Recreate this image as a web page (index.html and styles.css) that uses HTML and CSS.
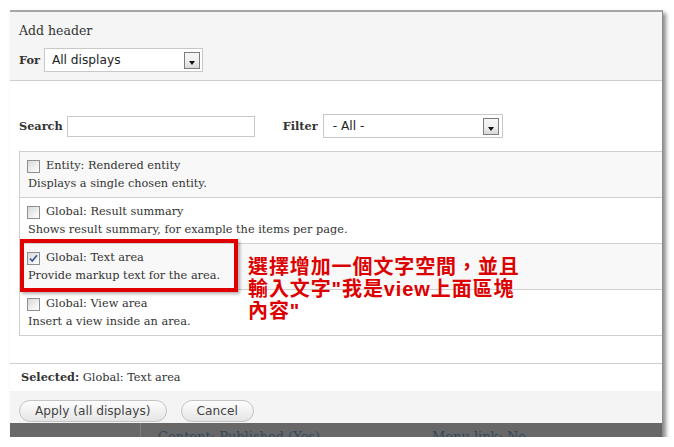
FILE: index.html
```html
<!DOCTYPE html>
<html lang="zh-Hant">
<head>
    <meta charset="UTF-8">
    <meta name="viewport" content="width=device-width, initial-scale=1.0">
    <title>Add header</title>
    <link rel="stylesheet" href="styles.css">
</head>
<body>
    <div class="shot">
        <div class="dialog-head">
            <h1>Add header</h1>
            <div class="for-row">
                <label>For</label>
                <div class="select select-for">
                    <span>All displays</span>
                    <span class="arrow"></span>
                </div>
            </div>
        </div>

        <div class="dialog-body">
            <div class="filters">
                <label>Search</label>
                <div class="search-input"></div>
                <label class="filter-label">Filter</label>
                <div class="select select-filter">
                    <span>- All -</span>
                    <span class="arrow"></span>
                </div>
            </div>

            <div class="options">
                <div class="option shaded">
                    <div class="option-title"><span class="checkbox"></span>Entity: Rendered entity</div>
                    <div class="option-desc">Displays a single chosen entity.</div>
                </div>
                <div class="option">
                    <div class="option-title"><span class="checkbox"></span>Global: Result summary</div>
                    <div class="option-desc">Shows result summary, for example the items per page.</div>
                </div>
                <div class="option shaded">
                    <div class="option-title">
                        <span class="checkbox">
                            <svg width="11" height="11" viewBox="0 0 11 11"><path d="M2 5.5 L4.3 8 L9 2.3" fill="none" stroke="#3f5797" stroke-width="1.8"/></svg>
                        </span>Global: Text area
                    </div>
                    <div class="option-desc">Provide markup text for the area.</div>
                </div>
                <div class="option">
                    <div class="option-title"><span class="checkbox"></span>Global: View area</div>
                    <div class="option-desc">Insert a view inside an area.</div>
                </div>
            </div>

            <!-- annotation drawn on top of the screenshot -->
            <div class="mark"></div>
            <div class="note">選擇增加一個文字空間，並且<br>輸入文字"我是view上面區塊<br>內容"</div>
        </div>

        <div class="selected"><b>Selected:</b> Global: Text area</div>

        <div class="buttons">
            <button>Apply (all displays)</button>
            <button>Cancel</button>
        </div>

        <div class="behind">
            <div class="behind-side"></div>
            <div class="behind-main">
                <span class="behind-link">Content: Published (Yes)</span><span>Menu link: No</span>
            </div>
        </div>
    </div>
</body>
</html>
```

FILE: styles.css
```css
body {
    margin: 0;
    background-color: #fff;
    font-family: "DejaVu Serif", Georgia, serif;
    font-size: 11.3px;
    color: #333;
}
.shot {
    width: 652px;
    margin: 10px 0 0 10px;
    border-top: 2px solid #a6a6a6;
    border-right: 1px solid #8c8c8c;
    box-shadow: 3px 3px 4px rgba(0,0,0,0.45);
    overflow: hidden;
}
.dialog-head {
    background-color: #f5f5f5;
    padding: 10px 9px 8px;
    border-bottom: 1px solid #cdcdcd;
}
.dialog-head h1 {
    margin: 0;
    font-size: 12.5px;
    font-weight: normal;
    line-height: 18px;
}
.for-row {
    display: flex;
    align-items: center;
    margin-top: 8px;
}
label {
    font-weight: bold;
    margin-right: 4px;
}
.select {
    display: flex;
    align-items: center;
    justify-content: space-between;
    box-sizing: border-box;
    height: 24px;
    padding: 0 2px 0 7px;
    border: 1px solid #c8c8c8;
    background-color: #fff;
    font-family: "DejaVu Sans", Tahoma, sans-serif;
    font-size: 12.2px;
    color: #222;
}
.select-for {
    width: 159px;
}
.select-filter {
    width: 180px;
    padding-left: 9px;
    padding-right: 3px;
}
.arrow {
    position: relative;
    width: 16px;
    height: 17px;
    box-sizing: border-box;
    border: 1px solid #7d7d7d;
    background: linear-gradient(#f6f6f6, #f0f0f0 50%, #d9d9d9);
}
.arrow::after {
    content: "";
    position: absolute;
    left: 4px;
    top: 8px;
    border-left: 3.5px solid transparent;
    border-right: 3.5px solid transparent;
    border-top: 4px solid #111;
}
.dialog-body {
    position: relative;
    padding: 33px 0 27px 9px;
    border-bottom: 1px solid #cdcdcd;
}
.filters {
    display: flex;
    align-items: center;
    height: 24px;
}
.search-input {
    width: 188px;
    height: 21px;
    box-sizing: border-box;
    border: 1px solid #c8c8c8;
}
.filter-label {
    margin-left: 28px;
    margin-right: 5px;
}
.options {
    width: 700px;
    margin-top: 13px;
    border: 1px solid #cfcfcf;
}
.option {
    height: 36px;
    padding: 5px 7px 4px;
    line-height: 18px;
}
.option + .option {
    border-top: 1px solid #cfcfcf;
}
.shaded {
    background-color: #f8f8f8;
}
.option-title {
    display: flex;
    align-items: center;
}
.checkbox {
    display: flex;
    align-items: center;
    justify-content: center;
    width: 13px;
    height: 13px;
    box-sizing: border-box;
    margin-right: 6px;
    border: 1px solid #8f8f8f;
    background: linear-gradient(135deg, #d8d8d8, #f4f4f4 70%, #fff);
}
.option-desc {
    padding-left: 1px;
}
.mark {
    position: absolute;
    left: 10px;
    top: 158px;
    width: 218px;
    height: 53px;
    box-sizing: border-box;
    border: 4px solid #e00000;
    box-shadow: 2px 2px 3px rgba(0,0,0,0.3);
}
.note {
    position: absolute;
    left: 238px;
    top: 175px;
    font-family: "Liberation Sans", "Noto Sans CJK TC", sans-serif;
    font-size: 20px;
    font-weight: bold;
    line-height: 22px;
    letter-spacing: 0.9px;
    color: #dd0000;
}
.selected {
    padding: 0 11px;
    line-height: 27px;
    background-color: #fff;
}
.buttons {
    display: flex;
    align-items: flex-start;
    gap: 14px;
    box-sizing: border-box;
    height: 32px;
    padding: 9px 9px 0;
    background-color: #f4f4f4;
}
button {
    height: 22px;
    padding: 0 15px;
    border: 1px solid #c4c4c4;
    border-radius: 11px;
    background: linear-gradient(#fdfdfd, #e5e5e5);
    font-family: "DejaVu Sans", Tahoma, sans-serif;
    font-size: 12.2px;
    color: #444;
}
.behind {
    display: flex;
    height: 14px;
    overflow: hidden;
    background-color: #686868;
}
.behind-side {
    width: 130px;
    border-right: 1px solid #7e7e7e;
}
.behind-main {
    padding: 6px 0 0 17px;
    font-size: 13px;
    line-height: 16px;
    color: #34485c;
    white-space: nowrap;
}
.behind-link {
    display: inline-block;
    width: 274px;
}
```
